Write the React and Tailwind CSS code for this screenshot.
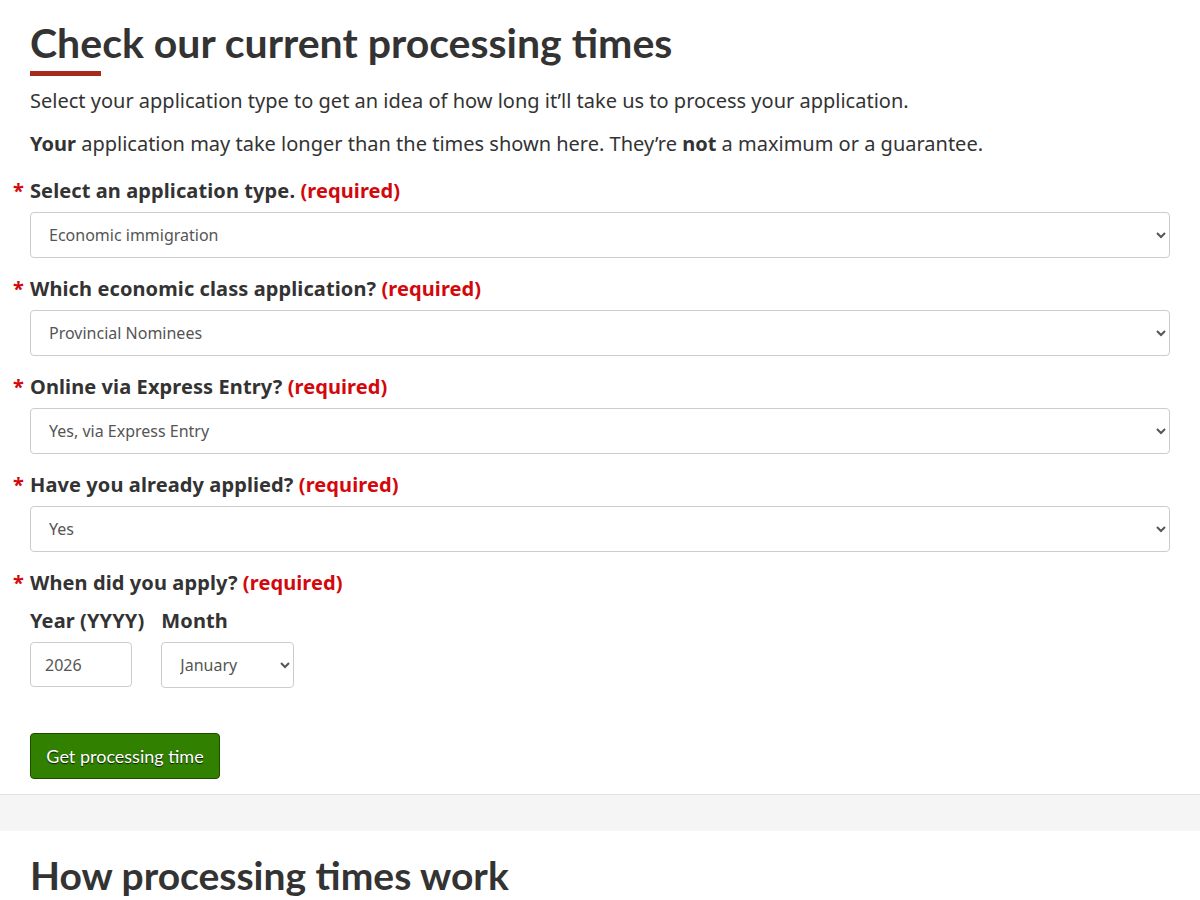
import React, { useState } from 'react';

const heading = { fontFamily: 'Lato, "Liberation Sans", sans-serif' };
const body = { fontFamily: '"Noto Sans", "Liberation Sans", sans-serif' };

const fields = [
  {
    id: 'type',
    label: 'Select an application type.',
    options: ['Economic immigration', 'Family sponsorship', 'Refugees', 'Visitor visa'],
  },
  {
    id: 'class',
    label: 'Which economic class application?',
    options: ['Provincial Nominees', 'Canadian Experience Class', 'Federal Skilled Workers'],
  },
  {
    id: 'express',
    label: 'Online via Express Entry?',
    options: ['Yes, via Express Entry', 'No, paper-based'],
  },
  {
    id: 'applied',
    label: 'Have you already applied?',
    options: ['Yes', 'No'],
  },
];

const months = [
  'January', 'February', 'March', 'April', 'May', 'June',
  'July', 'August', 'September', 'October', 'November', 'December',
];

function Label({ htmlFor, children }) {
  return (
    <label htmlFor={htmlFor} className="flex items-baseline text-[20px] leading-[32px] font-bold tracking-[0.1px] text-[#333]">
      <span className="-ml-[17px] w-[17px] text-[#d3080c]">*</span>
      <span>
        {children} <span className="text-[#d3080c]">(required)</span>
      </span>
    </label>
  );
}

export default function App() {
  const [values, setValues] = useState({
    type: 'Economic immigration',
    class: 'Provincial Nominees',
    express: 'Yes, via Express Entry',
    applied: 'Yes',
  });
  const [year, setYear] = useState('2026');
  const [month, setMonth] = useState('January');

  return (
    <div className="min-h-screen bg-white text-[#333]" style={body}>
      <main className="px-[30px] pt-[21px]">
        <h1 className="text-[41px] leading-[44px] font-bold text-[#333]" style={heading}>
          Check our current processing times
        </h1>
        <div className="mt-[6px] h-[5px] w-[71px] bg-[#a62a1e]" />
        <p className="mt-[9px] text-[20px] leading-[32px]">
          Select your application type to get an idea of how long it’ll take us to process your application.
        </p>
        <p className="mt-[11px] text-[20px] leading-[32px]">
          <strong>Your</strong> application may take longer than the times shown here. They’re <strong>not</strong> a maximum or a guarantee.
        </p>

        <form className="mt-[15px]" onSubmit={(e) => e.preventDefault()}>
          {fields.map((f) => (
            <div key={f.id} className="mb-[15px]">
              <Label htmlFor={f.id}>{f.label}</Label>
              <select
                id={f.id}
                value={values[f.id]}
                onChange={(e) => setValues({ ...values, [f.id]: e.target.value })}
                className="mt-[5px] block h-[46px] w-full rounded-[4px] border border-[#ccc] bg-white pl-[14px] pr-[8px] text-[16px] text-[#555]"
                style={body}
              >
                {f.options.map((o) => (
                  <option key={o}>{o}</option>
                ))}
              </select>
            </div>
          ))}

          <div className="mt-[15px]">
            <Label>When did you apply?</Label>
            <div className="mt-[6px] flex gap-[17px]">
              <div>
                <label htmlFor="year" className="block text-[20px] leading-[32px] font-bold tracking-[0.1px]">Year (YYYY)</label>
                <input
                  id="year"
                  value={year}
                  onChange={(e) => setYear(e.target.value)}
                  className="mt-[5px] block h-[45px] w-[102px] rounded-[4px] border border-[#ccc] bg-white px-[14px] text-[16px] text-[#555]"
                  style={body}
                />
              </div>
              <div>
                <label htmlFor="month" className="block text-[20px] leading-[32px] font-bold tracking-[0.1px]">Month</label>
                <select
                  id="month"
                  value={month}
                  onChange={(e) => setMonth(e.target.value)}
                  className="mt-[5px] block h-[46px] w-[133px] rounded-[4px] border border-[#ccc] bg-white pl-[14px] pr-[6px] text-[16px] text-[#555]"
                  style={body}
                >
                  {months.map((m) => (
                    <option key={m}>{m}</option>
                  ))}
                </select>
              </div>
            </div>
          </div>

          <button
            type="submit"
            className="mt-[45px] h-[46px] w-[190px] rounded-[4px] border border-[#1e4d00] bg-[#318000] text-[18px] text-white [text-shadow:0_1px_1px_rgba(0,0,0,0.8)]"
            style={heading}
          >
            Get processing time
          </button>
        </form>
      </main>

      <div className="mt-[15px] h-[37px] border-t border-[#e3e3e3] bg-[#f5f5f5]" />

      <section className="px-[30px] pt-[22px]">
        <h2 className="text-[39px] leading-[44px] font-bold text-[#333]" style={heading}>
          How processing times work
        </h2>
      </section>
    </div>
  );
}
